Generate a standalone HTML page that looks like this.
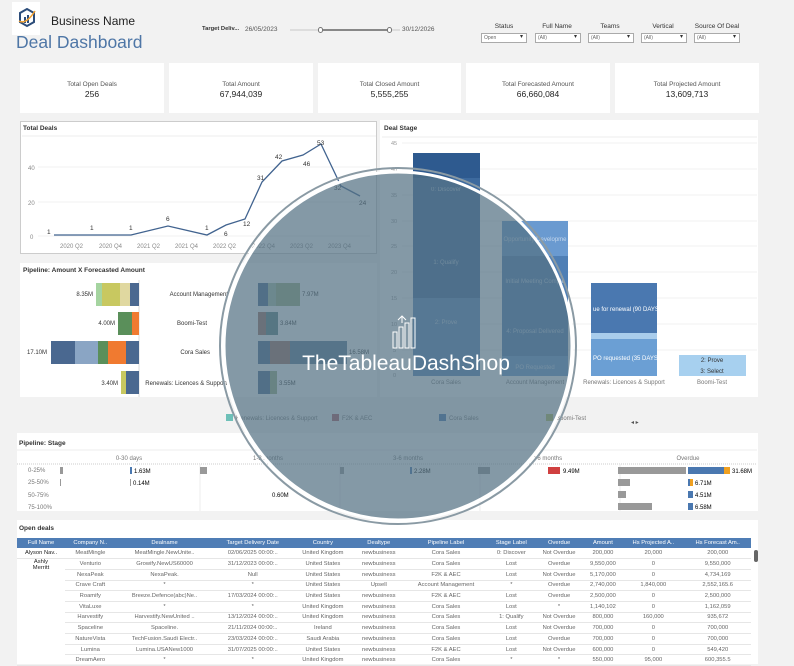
<!DOCTYPE html>
<html><head><meta charset="utf-8"><style>
*{margin:0;padding:0;box-sizing:border-box}
body{width:794px;height:664px;overflow:hidden;background:#f2f2f2;font-family:"Liberation Sans",sans-serif;position:relative;color:#333}
.a{position:absolute}
.card{position:absolute;background:#fff}
.kt{position:absolute;width:100%;text-align:center;font-size:6.5px;color:#555;top:18px}
.kv{position:absolute;width:100%;text-align:center;font-size:8.5px;color:#222;top:26px}
.fl{position:absolute;font-size:6.5px;color:#333;text-align:center;width:48px}
.dd{position:absolute;height:10px;width:46px;border:1px solid #aaa;background:#fff;font-size:5px;color:#666;padding:2px 2px;line-height:5px}
.dd:after{content:"▾";position:absolute;right:3px;top:1px;font-size:6px;color:#333}
table{border-collapse:collapse;font-size:5.8px;position:absolute;left:17px;top:538px;width:734px}
th{background:#4f7db5;color:#fff;font-weight:normal;height:10px;text-align:center;white-space:nowrap;overflow:hidden}
td{height:10.7px;text-align:center;color:#666;border-bottom:1px solid #e6e6e6;white-space:nowrap;overflow:hidden}
</style></head><body>
<div class="a" style="left:12px;top:2px;width:28px;height:33px;background:#fff"></div>
<svg class="a" style="left:18px;top:8px" width="18" height="20" viewBox="0 0 18 20"><path d="M9 1L16 5V14L9 18L2 14V5Z" fill="none" stroke="#2d4d7a" stroke-width="2"/><rect x="6" y="9" width="2" height="6" fill="#2d4d7a"/><rect x="9" y="7" width="2" height="8" fill="#2d4d7a"/><path d="M1 13Q8 17 17 3" stroke="#f0a030" stroke-width="1.5" fill="none"/></svg>
<div class="a" style="left:51px;top:14px;font-size:12px;color:#222">Business Name</div>
<div class="a" style="left:16px;top:32px;font-size:17.5px;color:#4e76a6">Deal Dashboard</div>
<div class="a" style="left:202px;top:26px;font-size:5.8px;color:#333;font-weight:bold">Target Deliv...</div>
<div class="a" style="left:245px;top:26px;font-size:6.5px;color:#555">26/05/2023</div>
<div class="a" style="left:290px;top:29px;width:110px;height:2px;background:#ddd"></div>
<div class="a" style="left:320px;top:29px;width:68px;height:2px;background:#888"></div>
<div class="a" style="left:318px;top:27px;width:5px;height:6px;border:1px solid #777;border-radius:3px;background:#fff"></div>
<div class="a" style="left:387px;top:27px;width:5px;height:6px;border:1px solid #777;border-radius:3px;background:#fff"></div>
<div class="a" style="left:402px;top:26px;font-size:6.5px;color:#555">30/12/2026</div>
<div class="fl" style="left:480px;top:23px">Status</div><div class="dd" style="left:481px;top:33px">Open</div>
<div class="fl" style="left:533px;top:23px">Full Name</div><div class="dd" style="left:535px;top:33px">(All)</div>
<div class="fl" style="left:586px;top:23px">Teams</div><div class="dd" style="left:588px;top:33px">(All)</div>
<div class="fl" style="left:639px;top:23px">Vertical</div><div class="dd" style="left:641px;top:33px">(All)</div>
<div class="fl" style="left:693px;top:23px">Source Of Deal</div><div class="dd" style="left:694px;top:33px">(All)</div>

<div class="card" style="left:20px;top:63px;width:144px;height:50px"><div class="kt">Total Open Deals</div><div class="kv">256</div></div>
<div class="card" style="left:169px;top:63px;width:144px;height:50px"><div class="kt">Total Amount</div><div class="kv">67,944,039</div></div>
<div class="card" style="left:318px;top:63px;width:143px;height:50px"><div class="kt">Total Closed Amount</div><div class="kv">5,555,255</div></div>
<div class="card" style="left:466px;top:63px;width:144px;height:50px"><div class="kt">Total Forecasted Amount</div><div class="kv">66,660,084</div></div>
<div class="card" style="left:615px;top:63px;width:144px;height:50px"><div class="kt">Total Projected Amount</div><div class="kv">13,609,713</div></div>

<div class="card" style="left:20px;top:121px;width:357px;height:133px;border:1px solid #ccc"></div>
<div class="card" style="left:380px;top:120px;width:378px;height:277px"></div>
<div class="card" style="left:20px;top:263px;width:357px;height:134px"></div>
<div class="card" style="left:17px;top:433px;width:741px;height:78px"></div>
<div class="card" style="left:17px;top:520px;width:741px;height:144px"></div>

<svg class="a" style="left:0;top:0" width="794" height="664" font-family="Liberation Sans,sans-serif">
<g font-size="6.5" fill="#333">
<text x="23" y="130" font-weight="bold">Total Deals</text>
<text x="384" y="130" font-weight="bold">Deal Stage</text>
<text x="23" y="272" font-weight="bold">Pipeline: Amount X Forecasted Amount</text>
<text x="19" y="445" font-weight="bold">Pipeline: Stage</text>
<text x="19" y="530" font-weight="bold">Open deals</text>
</g>
<line x1="22" y1="136" x2="376" y2="136" stroke="#eee"/>
<line x1="382" y1="137" x2="757" y2="137" stroke="#eee"/>
<g stroke="#f0f0f0"><line x1="38" y1="167" x2="370" y2="167"/><line x1="38" y1="202" x2="370" y2="202"/><line x1="38" y1="236" x2="370" y2="236"/></g>
<g font-size="6" fill="#888"><text x="28" y="170">40</text><text x="28" y="205">20</text><text x="30" y="239">0</text>
<text x="60" y="248">2020 Q2</text><text x="99" y="248">2020 Q4</text><text x="137" y="248">2021 Q2</text><text x="175" y="248">2021 Q4</text><text x="213" y="248">2022 Q2</text><text x="252" y="248">2022 Q4</text><text x="290" y="248">2023 Q2</text><text x="328" y="248">2023 Q4</text></g>
<polyline points="54,235 92,235 131,235 168,226 207,235 226,225 245,219 262,182 282,161 303,155 321,144 341,186 360,196" fill="none" stroke="#41638f" stroke-width="1.3"/>
<g font-size="6.5" fill="#333"><text x="47" y="234">1</text><text x="90" y="230">1</text><text x="129" y="230">1</text><text x="166" y="221">6</text><text x="205" y="230">1</text><text x="224" y="236">6</text><text x="243" y="226">12</text><text x="257" y="180">31</text><text x="275" y="159">42</text><text x="303" y="166">46</text><text x="317" y="145">53</text><text x="334" y="190">32</text><text x="359" y="205">24</text></g>
<g stroke="#f0f0f0"><line x1="402" y1="143" x2="757" y2="143"/><line x1="402" y1="169" x2="757" y2="169"/><line x1="402" y1="195" x2="757" y2="195"/><line x1="402" y1="221" x2="757" y2="221"/><line x1="402" y1="246" x2="757" y2="246"/><line x1="402" y1="272" x2="757" y2="272"/><line x1="402" y1="298" x2="757" y2="298"/><line x1="402" y1="324" x2="757" y2="324"/><line x1="402" y1="350" x2="757" y2="350"/></g>
<g font-size="5.5" fill="#999"><text x="391" y="145">45</text><text x="391" y="171">40</text><text x="391" y="197">35</text><text x="391" y="223">30</text><text x="391" y="248">25</text><text x="391" y="274">20</text><text x="391" y="300">15</text><text x="391" y="326">10</text><text x="393" y="352">5</text><text x="393" y="377">0</text></g>
<rect x="413" y="153" width="67" height="25" fill="#2e5a8f"/><rect x="413" y="178" width="67" height="120" fill="#3d6a9e"/><rect x="413" y="298" width="67" height="78" fill="#5a89bd"/>
<rect x="502" y="221" width="66" height="35" fill="#6a9ad0"/><rect x="502" y="256" width="66" height="100" fill="#4f7fb5"/><rect x="502" y="356" width="66" height="20" fill="#6a9ad0"/>
<rect x="591" y="283" width="66" height="50" fill="#4a78b0"/><rect x="591" y="333" width="66" height="6" fill="#a9cdec"/><rect x="591" y="339" width="66" height="37" fill="#6b9fd4"/>
<rect x="679" y="355" width="67" height="21" fill="#a7d0ef"/>
<g font-size="6" fill="#fff" text-anchor="middle" opacity="0.6"><text x="446" y="191">0: Discover</text><text x="446" y="264">1: Qualify</text><text x="446" y="324">2: Prove</text><text x="535" y="241">Opportunity Developme</text><text x="535" y="283">Initial Meeting Comple</text><text x="535" y="333">4: Proposal Delivered</text><text x="535" y="369">PO Requested</text></g>
<g font-size="6" fill="#fff"><text x="593" y="311">ue for renewal (90 DAYS</text><text x="593" y="360">PO requested (35 DAYS)</text></g>
<g font-size="6" fill="#333" text-anchor="middle"><text x="712" y="362">2: Prove</text><text x="712" y="373">3: Select</text></g>
<g font-size="6" fill="#777" text-anchor="middle"><text x="446" y="384">Cora Sales</text><text x="535" y="384">Account Management</text><text x="624" y="384">Renewals: Licences &amp; Support</text><text x="712" y="384">Boomi-Test</text></g>
<g font-size="6" fill="#333" text-anchor="end"><text x="93" y="296">8.35M</text><text x="115" y="325">4.00M</text><text x="47" y="354">17.10M</text><text x="118" y="385">3.40M</text>
<text x="228" y="296">Account Management</text><text x="207" y="325">Boomi-Test</text><text x="210" y="354">Cora Sales</text><text x="227" y="385">Renewals: Licences &amp; Support</text></g>
<line x1="139" y1="280" x2="139" y2="397" stroke="#ddd"/>
<rect x="96" y="283" width="6" height="23" fill="#a5d4a0"/><rect x="102" y="283" width="18" height="23" fill="#c8c860"/><rect x="120" y="283" width="10" height="23" fill="#e0d8a0"/><rect x="130" y="283" width="9" height="23" fill="#4a6890"/>
<rect x="118" y="312" width="14" height="23" fill="#5a8f5a"/><rect x="132" y="312" width="7" height="23" fill="#f07a30"/>
<rect x="51" y="341" width="24" height="23" fill="#4a6890"/><rect x="75" y="341" width="23" height="23" fill="#8aa5c4"/><rect x="98" y="341" width="10" height="23" fill="#5a8f5a"/><rect x="108" y="341" width="18" height="23" fill="#f07a30"/><rect x="126" y="341" width="13" height="23" fill="#4a6890"/>
<rect x="121" y="371" width="5" height="23" fill="#c8c860"/><rect x="126" y="371" width="13" height="23" fill="#4a6890"/>
<rect x="258" y="283" width="10" height="23" fill="#4a6890"/><rect x="268" y="283" width="8" height="23" fill="#a8c0a8"/><rect x="276" y="283" width="24" height="23" fill="#9ab080"/>
<rect x="258" y="312" width="8" height="23" fill="#a07060"/><rect x="266" y="312" width="12" height="23" fill="#5a8080"/>
<rect x="258" y="341" width="12" height="23" fill="#4a6890"/><rect x="270" y="341" width="20" height="23" fill="#a07060"/><rect x="290" y="341" width="57" height="23" fill="#5a7a98"/>
<rect x="258" y="371" width="12" height="23" fill="#4a6890"/><rect x="270" y="371" width="7" height="23" fill="#9ab080"/>
<g font-size="6" fill="#333"><text x="302" y="296">7.97M</text><text x="280" y="325">3.84M</text><text x="349" y="354">16.58M</text><text x="279" y="385">3.55M</text></g>
<rect x="226" y="414" width="7" height="7" fill="#6ec0b8"/><text x="236" y="420" font-size="6" fill="#777">Renewals: Licences &amp; Support</text>
<rect x="332" y="414" width="7" height="7" fill="#b05a60"/><text x="342" y="420" font-size="6" fill="#777">F2K &amp; AEC</text>
<rect x="439" y="414" width="7" height="7" fill="#4a78b0"/><text x="449" y="420" font-size="6" fill="#777">Cora Sales</text>
<rect x="546" y="414" width="7" height="7" fill="#b8c060"/><text x="556" y="420" font-size="6" fill="#777">Boomi-Test</text>
<text x="631" y="424" font-size="6" fill="#555">◂ ▸</text>
<line x1="17" y1="450" x2="757" y2="450" stroke="#eee"/>
<g font-size="6" fill="#777" text-anchor="middle"><text x="129" y="460">0-30 days</text><text x="268" y="460">1-3 months</text><text x="408" y="460">3-6 months</text><text x="548" y="460">&gt;6 months</text><text x="688" y="460">Overdue</text></g>
<line x1="17" y1="464" x2="757" y2="464" stroke="#ccc" stroke-dasharray="1,1"/>
<g font-size="6" fill="#777"><text x="28" y="472">0-25%</text><text x="28" y="484">25-50%</text><text x="28" y="497">50-75%</text><text x="28" y="509">75-100%</text></g>
<g stroke="#eee"><line x1="200" y1="464" x2="200" y2="511"/><line x1="340" y1="464" x2="340" y2="511"/><line x1="480" y1="464" x2="480" y2="511"/><line x1="620" y1="464" x2="620" y2="511"/></g>
<rect x="60" y="467" width="3" height="7" fill="#999"/><rect x="130" y="467" width="2" height="7" fill="#4a78b0"/><text x="134" y="473" font-size="6">1.63M</text>
<rect x="200" y="467" width="7" height="7" fill="#999"/><rect x="340" y="467" width="4" height="7" fill="#999"/><rect x="410" y="467" width="2" height="7" fill="#4a78b0"/><text x="414" y="473" font-size="6">2.28M</text>
<rect x="478" y="467" width="12" height="7" fill="#999"/><rect x="548" y="467" width="12" height="7" fill="#d04040"/><text x="563" y="473" font-size="6">9.49M</text>
<rect x="618" y="467" width="68" height="7" fill="#999"/><rect x="688" y="467" width="36" height="7" fill="#4a78b0"/><rect x="724" y="467" width="6" height="7" fill="#f0a020"/><text x="732" y="473" font-size="6">31.68M</text>
<rect x="60" y="479" width="1" height="7" fill="#999"/><rect x="130" y="479" width="1" height="7" fill="#999"/><text x="133" y="485" font-size="6">0.14M</text>
<rect x="618" y="479" width="12" height="7" fill="#999"/><rect x="688" y="479" width="5" height="7" fill="#4a78b0"/><rect x="690" y="479" width="3" height="7" fill="#f0a020"/><text x="695" y="485" font-size="6">6.71M</text>
<text x="272" y="497" font-size="6">0.60M</text><rect x="618" y="491" width="8" height="7" fill="#999"/><rect x="688" y="491" width="5" height="7" fill="#4a78b0"/><text x="695" y="497" font-size="6">4.51M</text>
<rect x="618" y="503" width="34" height="7" fill="#999"/><rect x="688" y="503" width="5" height="7" fill="#4a78b0"/><text x="695" y="509" font-size="6">6.58M</text>
<rect x="754" y="550" width="4" height="12" rx="2" fill="#666"/>
</svg>

<table>
<tr><th>Full Name</th><th>Company N..</th><th>Dealname</th><th>Target Delivery Date</th><th>Country</th><th>Dealtype</th><th>Pipeline Label</th><th>Stage Label</th><th>Overdue</th><th>Amount</th><th>Hs Projected A..</th><th>Hs Forecast Am..</th></tr>
<tr><td style="color:#222">Alyson Nav..</td><td>MeatMingle</td><td>MeatMingle.NewUnite..</td><td>02/06/2025 00:00:..</td><td>United Kingdom</td><td>newbusiness</td><td>Cora Sales</td><td>0: Discover</td><td>Not Overdue</td><td>200,000</td><td>20,000</td><td>200,000</td></tr>
<tr><td rowspan="10" style="vertical-align:top;color:#222;white-space:normal">Ashly<br>Merritt</td><td>Venturio</td><td>Growify.NewUS60000</td><td>31/12/2023 00:00:..</td><td>United States</td><td>newbusiness</td><td>Cora Sales</td><td>Lost</td><td>Overdue</td><td>9,550,000</td><td>0</td><td>9,550,000</td></tr>
<tr><td>NexaPeak</td><td>NexaPeak.</td><td>Null</td><td>United States</td><td>newbusiness</td><td>F2K &amp; AEC</td><td>Lost</td><td>Not Overdue</td><td>5,170,000</td><td>0</td><td>4,734,169</td></tr>
<tr><td>Crave Craft</td><td>*</td><td>*</td><td>United States</td><td>Upsell</td><td>Account Management</td><td>*</td><td>Overdue</td><td>2,740,000</td><td>1,840,000</td><td>2,552,165.6</td></tr>
<tr><td>Roamify</td><td>Breeze.Defence(abc)Ne..</td><td>17/03/2024 00:00:..</td><td>United States</td><td>newbusiness</td><td>F2K &amp; AEC</td><td>Lost</td><td>Overdue</td><td>2,500,000</td><td>0</td><td>2,500,000</td></tr>
<tr><td>VitaLuxe</td><td>*</td><td>*</td><td>United Kingdom</td><td>newbusiness</td><td>Cora Sales</td><td>Lost</td><td>*</td><td>1,140,102</td><td>0</td><td>1,162,059</td></tr>
<tr><td>Harvestify</td><td>Harvestify.NewUnited ..</td><td>13/12/2024 00:00:..</td><td>United Kingdom</td><td>newbusiness</td><td>Cora Sales</td><td>1: Qualify</td><td>Not Overdue</td><td>800,000</td><td>160,000</td><td>935,672</td></tr>
<tr><td>Spaceline</td><td>Spaceline.</td><td>21/11/2024 00:00:..</td><td>Ireland</td><td>newbusiness</td><td>Cora Sales</td><td>Lost</td><td>Not Overdue</td><td>700,000</td><td>0</td><td>700,000</td></tr>
<tr><td>NatureVista</td><td>TechFusion.Saudi Electr..</td><td>23/03/2024 00:00:..</td><td>Saudi Arabia</td><td>newbusiness</td><td>Cora Sales</td><td>Lost</td><td>Overdue</td><td>700,000</td><td>0</td><td>700,000</td></tr>
<tr><td>Lumina</td><td>Lumina.USANew1000</td><td>31/07/2025 00:00:..</td><td>United States</td><td>newbusiness</td><td>F2K &amp; AEC</td><td>Lost</td><td>Not Overdue</td><td>600,000</td><td>0</td><td>549,420</td></tr>
<tr><td>DreamAero</td><td>*</td><td>*</td><td>United Kingdom</td><td>newbusiness</td><td>Cora Sales</td><td>*</td><td>*</td><td>550,000</td><td>95,000</td><td>600,355.5</td></tr>
</table>

<svg class="a" style="left:0;top:0" width="794" height="664">
<circle cx="398" cy="346" r="178" fill="none" stroke="#8a9aa4" stroke-width="2"/>
<circle cx="398" cy="346" r="174" fill="rgba(84,114,132,0.72)" stroke="#fff" stroke-width="3"/>
<g fill="none" stroke="#fff" stroke-width="1"><rect x="393" y="332" width="4" height="16"/><rect x="399" y="327" width="4" height="21"/><rect x="405" y="323" width="4" height="25"/><rect x="411" y="318" width="4" height="30"/><path d="M398 320l4-4 4 4M402 316v7"/></g>
<text x="406" y="370" text-anchor="middle" font-family="Liberation Sans,sans-serif" font-size="21" fill="#fff">TheTableauDashShop</text>
</svg>
</body></html>
